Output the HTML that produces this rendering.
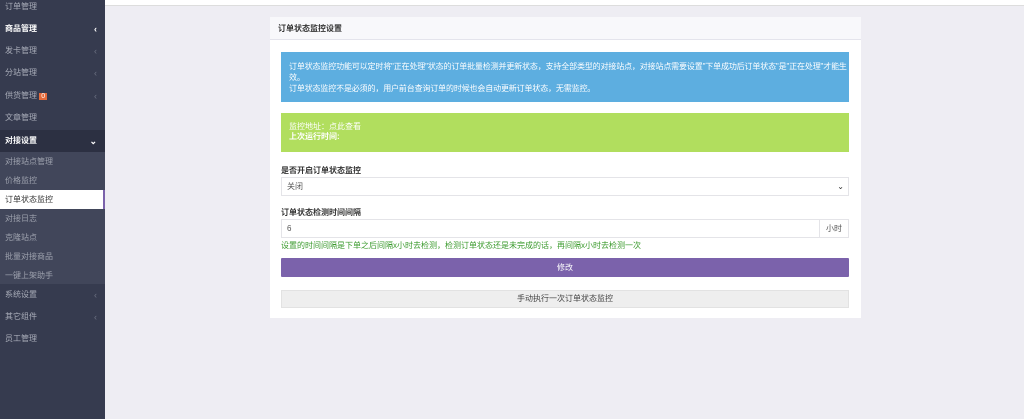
<!DOCTYPE html>
<html><head><meta charset="utf-8"><style>
*{box-sizing:border-box;margin:0;padding:0}
body{width:1024px;height:419px;overflow:hidden;background:#eeedf3;font-family:"Liberation Sans","Noto Sans CJK SC",sans-serif;font-size:8px;position:relative}
#sb{position:absolute;left:0;top:0;width:105px;height:419px;background:#363b4f}
.it{position:absolute;left:0;width:105px;height:22px;line-height:22px;padding-left:5px;color:#a9adb9}
.it .ar{position:absolute;right:8px;top:0;color:#6d7283;font-size:9px}
.sub{position:absolute;left:0;top:152px;width:105px;height:132px;background:#41465a}
.si{position:absolute;left:0;width:105px;height:19px;line-height:19px;padding-left:5px;color:#9da1ad}
#top{position:absolute;left:105px;top:0;width:919px;height:6px;background:#fff;border-bottom:1px solid #ddd}
#card{position:absolute;left:270px;top:17px;width:591px;height:301px;background:#fff}
#hd{height:23px;background:#f8f8fb;border-bottom:1px solid #e4e4ec;line-height:23px;padding-left:8px;color:#333;font-weight:bold}
.abs{position:absolute}
</style></head><body>
<div id="sb">
<div class="it" style="top:-4px">订单管理</div>
<div class="it" style="top:18px;color:#fff;font-weight:bold">商品管理<span class="ar" style="color:#fff">‹</span></div>
<div class="it" style="top:40px">发卡管理<span class="ar">‹</span></div>
<div class="it" style="top:62px">分站管理<span class="ar">‹</span></div>
<div class="it" style="top:85px">供货管理 <span style="background:#e56a3a;color:#fff;padding:0 2px;font-size:7px">0</span><span class="ar">‹</span></div>
<div class="it" style="top:107px">文章管理</div>
<div class="it" style="top:130px;background:#2c3042;color:#fff;font-weight:bold">对接设置<span class="ar" style="color:#fff">⌄</span></div>
<div class="sub">
<div class="si" style="top:0">对接站点管理</div>
<div class="si" style="top:19px">价格监控</div>
<div class="si" style="top:38px;background:#fff;color:#333;border-right:2px solid #7b62ab">订单状态监控</div>
<div class="si" style="top:57px">对接日志</div>
<div class="si" style="top:76px">克隆站点</div>
<div class="si" style="top:95px">批量对接商品</div>
<div class="si" style="top:114px">一键上架助手</div>
</div>
<div class="it" style="top:284px">系统设置<span class="ar">‹</span></div>
<div class="it" style="top:306px">其它组件<span class="ar">‹</span></div>
<div class="it" style="top:328px">员工管理</div>
</div>
<div id="top"></div>
<div id="card">
<div id="hd">订单状态监控设置</div>
<div class="abs" style="left:11px;top:35px;width:568px;height:50px;background:#5daee0;color:#fff;padding:9px 2px 9px 8px;line-height:11px;letter-spacing:-0.15px">订单状态监控功能可以定时将"正在处理"状态的订单批量检测并更新状态，支持全部类型的对接站点，对接站点需要设置"下单成功后订单状态"是"正在处理"才能生效。<br>订单状态监控不是必须的，用户前台查询订单的时候也会自动更新订单状态，无需监控。</div>
<div class="abs" style="left:11px;top:96px;width:568px;height:39px;background:#b1de5e;color:#fff;padding:9px 8px;line-height:10px">监控地址：点此查看<br><b>上次运行时间:</b></div>
<div class="abs" style="left:11px;top:148px;font-weight:bold;color:#333">是否开启订单状态监控</div>
<div class="abs" style="left:11px;top:160px;width:568px;height:19px;border:1px solid #e4e4e8;line-height:17px;padding-left:5px;color:#555">关闭<span style="position:absolute;right:4px;color:#333">⌄</span></div>
<div class="abs" style="left:11px;top:190px;font-weight:bold;color:#333">订单状态检测时间间隔</div>
<div class="abs" style="left:11px;top:202px;width:568px;height:19px;border:1px solid #e4e4e8;line-height:17px;padding-left:5px;color:#555">6<span style="position:absolute;right:0;top:0;width:29px;height:17px;border-left:1px solid #e4e4e8;text-align:center">小时</span></div>
<div class="abs" style="left:11px;top:223px;color:#3a9a2c">设置的时间间隔是下单之后间隔x小时去检测，检测订单状态还是未完成的话，再间隔x小时去检测一次</div>
<div class="abs" style="left:11px;top:241px;width:568px;height:19px;background:#7b62ab;color:#fff;text-align:center;line-height:19px;border-radius:1px">修改</div>
<div class="abs" style="left:11px;top:273px;width:568px;height:18px;background:#eeeeee;border:1px solid #e2e2e2;color:#444;text-align:center;line-height:16px">手动执行一次订单状态监控</div>
</div>
</body></html>
